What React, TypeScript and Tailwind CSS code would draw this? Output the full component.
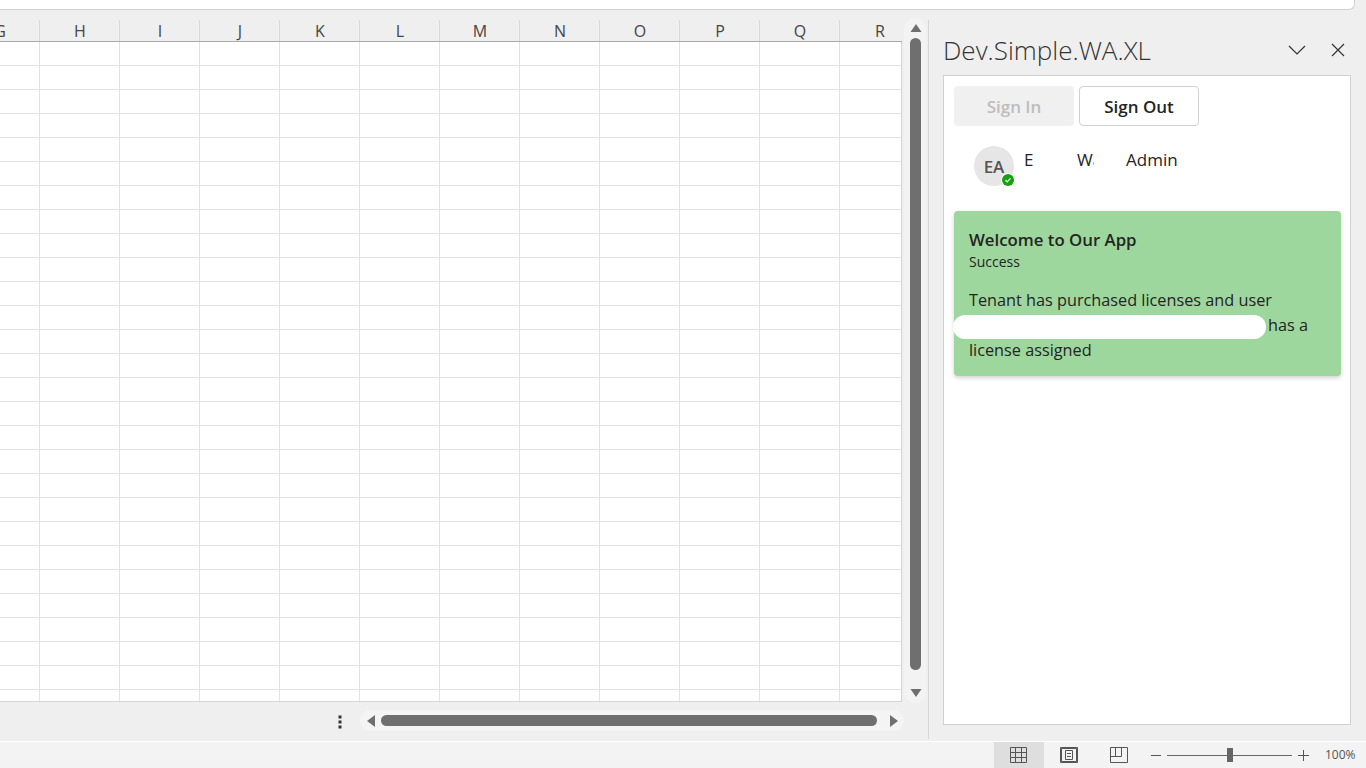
import React from "react";

const cols = ["G", "H", "I", "J", "K", "L", "M", "N", "O", "P", "Q", "R"];
const rows = Array.from({ length: 28 });

function ColumnHeader() {
  return (
    <div className="flex h-[22px] border-b border-[#a9a9a9] bg-[#efefef] overflow-hidden">
      <div className="flex ml-[-40px]">
        {cols.map((c) => (
          <div key={c} className="w-[80px] shrink-0 border-r border-[#d9d9d9] flex items-center justify-center text-[16px] leading-none text-[#444444] pl-[1px]">
            {c}
          </div>
        ))}
      </div>
    </div>
  );
}

function Grid() {
  return (
    <div className="flex-1 overflow-hidden bg-white border-b border-r border-[#d6d6d6]">
      {rows.map((_, i) => (
        <div key={i} className="flex h-[24px] ml-[-40px]">
          {cols.map((c) => (
            <div key={c} className="w-[80px] shrink-0 border-r border-b border-[#e1e1e1]" />
          ))}
        </div>
      ))}
    </div>
  );
}

function VScroll() {
  return (
    <div className="w-[26px] pl-[2px] mt-[-2px]">
      <div className="w-[22px] h-[685px] rounded-full bg-[#f3f3f3] flex flex-col items-start pl-[6px] pt-[6px]">
        <svg width="12" height="9" viewBox="0 0 12 9"><path d="M6 0 L11.5 8 L0.5 8 Z" fill="#6f6f6f" /></svg>
        <div className="w-[11px] h-[632px] mt-[5px] rounded-full bg-[#6f6f6f]" />
        <svg className="mt-[19px]" width="12" height="9" viewBox="0 0 12 9"><path d="M0.5 0 L11.5 0 L6 8 Z" fill="#6f6f6f" /></svg>
      </div>
    </div>
  );
}

function HScrollRow() {
  return (
    <div className="h-[37px] flex items-start shrink-0">
      <div className="w-[334px] shrink-0" />
      <svg className="mt-[12px] shrink-0" width="12" height="16" viewBox="0 0 12 16">
        <rect x="4.5" y="1.5" width="3" height="3" fill="#333" />
        <rect x="4.5" y="6.5" width="3" height="3" fill="#333" />
        <rect x="4.5" y="11.5" width="3" height="3" fill="#333" />
      </svg>
      <div className="ml-[14px] mt-[8px] w-[544px] h-[21px] rounded-full bg-[#f4f4f4] flex items-center pl-[6px] shrink-0">
        <svg className="shrink-0" width="10" height="12" viewBox="0 0 10 12"><path d="M9 0 L9 12 L1 6 Z" fill="#6f6f6f" /></svg>
        <div className="ml-[5px] w-[496px] h-[11px] rounded-full bg-[#6f6f6f] shrink-0" />
        <svg className="ml-[12px] shrink-0" width="10" height="12" viewBox="0 0 10 12"><path d="M1 0 L1 12 L9 6 Z" fill="#6f6f6f" /></svg>
      </div>
    </div>
  );
}

function Persona() {
  return (
    <div className="flex items-start pl-[30px] mt-[20px]">
      <div className="relative w-[40px] h-[40px] rounded-full bg-[#e6e6e6] flex items-center justify-center text-[17px] font-semibold text-[#555555] pt-[1px]">
        EA
        <div className="absolute right-[-1px] bottom-[-1px] w-[14px] h-[14px] rounded-full bg-white flex items-center justify-center">
          <div className="w-[12px] h-[12px] rounded-full bg-[#13a10e] flex items-center justify-center">
            <svg width="8" height="8" viewBox="0 0 8 8"><path d="M1.5 4.2 L3.2 5.8 L6.5 2.4" stroke="#ffffff" strokeWidth="1.2" fill="none" /></svg>
          </div>
        </div>
      </div>
      <div className="ml-[10px] w-[10px] overflow-hidden text-[17px] leading-[28px] text-[#242424]">Ed</div>
      <div className="ml-[43px] w-[17px] overflow-hidden text-[17px] leading-[28px] text-[#242424]">Wa</div>
      <div className="ml-[32px] text-[17px] leading-[28px] text-[#242424]">Admin</div>
    </div>
  );
}

function Card() {
  return (
    <div className="relative mt-[25px] ml-[10px] mr-[9px] h-[165px] rounded-[4px] bg-[#9ed79d] shadow-[0_2px_4px_rgba(0,0,0,0.18)] px-[15px] pt-[17px] text-[#242424]">
      <div className="text-[16.8px] font-semibold leading-[24px]">Welcome to Our App</div>
      <div className="text-[14px] leading-[20px]">Success</div>
      <div className="mt-[16px] text-[16.25px] leading-[25px]">
        <div>Tenant has purchased licenses and user</div>
        <div className="flex justify-end pr-[18px]">has a</div>
        <div>license assigned</div>
      </div>
      <div className="absolute left-[-1px] top-[104px] w-[313px] h-[24px] rounded-full bg-white" />
    </div>
  );
}

function TaskPane() {
  return (
    <div className="flex-1 flex flex-col pl-[14px] pr-[15px]">
      <div className="h-[65px] flex items-center justify-between shrink-0 pt-[14px]">
        <div className="text-[26px] leading-none font-light text-[#333333]">Dev.Simple.WA.XL</div>
        <div className="flex items-center pt-[1px]">
          <svg width="18" height="10" viewBox="0 0 18 10"><path d="M1 1 L9 9 L17 1" stroke="#333" strokeWidth="1.2" fill="none" /></svg>
          <svg className="ml-[25px] mr-[6px]" width="14" height="14" viewBox="0 0 14 14"><path d="M1 1 L13 13 M13 1 L1 13" stroke="#333" strokeWidth="1.2" fill="none" /></svg>
        </div>
      </div>
      <div className="h-[650px] bg-white border border-[#d0d0d0] pt-[10px]">
        <div className="flex gap-[5px] pl-[10px]">
          <div className="w-[120px] h-[40px] rounded-[4px] bg-[#f0f0f0] flex items-center justify-center text-[17px] font-semibold text-[#bdbdbd] pt-[1px]">Sign In</div>
          <div className="w-[120px] h-[40px] rounded-[4px] bg-white border border-[#d1d1d1] flex items-center justify-center text-[17px] font-semibold text-[#242424] pt-[1px]">Sign Out</div>
        </div>
        <Persona />
        <Card />
      </div>
    </div>
  );
}

function StatusBar() {
  return (
    <div className="h-[27px] bg-[#f3f3f3] border-t border-white flex items-stretch shrink-0">
      <div className="w-[994px] shrink-0" />
      <div className="w-[50px] bg-[#dedede] flex items-center justify-center pr-[1px]">
        <svg width="17" height="16" viewBox="0 0 17 16" fill="none" stroke="#555" strokeWidth="1">
          <path d="M0.5 0.5H16.5V15.5H0.5Z M0.5 5.5H16.5 M0.5 10.5H16.5 M5.5 0.5V15.5 M11.5 0.5V15.5" />
        </svg>
      </div>
      <div className="w-[50px] flex items-center justify-center">
        <svg width="18" height="16" viewBox="0 0 18 16" fill="none" stroke="#555" strokeWidth="1">
          <path d="M0.5 0.5H17.5V15.5H0.5Z M1.5 1.5H16.5V14.5H1.5Z M5.5 3.5H12.5V12.5H5.5Z M7 6.5H11 M7 9.5H11" />
        </svg>
      </div>
      <div className="w-[50px] flex items-center justify-center">
        <svg width="18" height="16" viewBox="0 0 18 16" fill="none" stroke="#555" strokeWidth="1">
          <path d="M0.5 0.5H17.5V15.5H0.5Z M5.5 0.5V9.5 M11.5 0.5V9.5 M0.5 9.5H11.5" />
        </svg>
      </div>
      <div className="flex items-center ml-[7px]">
        <div className="w-[10px] h-px bg-[#555]" />
        <div className="relative ml-[6px] w-[125px] h-px bg-[#666]">
          <div className="absolute left-[60px] top-[-7px] w-[6px] h-[14px] bg-[#666]" />
        </div>
        <svg className="ml-[6px]" width="11" height="11" viewBox="0 0 11 11"><path d="M0 5.5H11 M5.5 0V11" stroke="#555" strokeWidth="1" /></svg>
        <div className="ml-[16px] text-[12px] text-[#555555]">100%</div>
      </div>
    </div>
  );
}

export default function App() {
  return (
    <div className="w-[1366px] h-[768px] overflow-hidden bg-[#efefef] flex flex-col font-['Open_Sans',sans-serif]">
      <div className="h-[10px] shrink-0 mr-[11px] bg-white border-b border-r border-[#d0d0d0] rounded-br-[6px]" />
      <div className="flex-1 flex min-h-0">
        <div className="w-[929px] shrink-0 border-r border-[#d6d6d6] mt-[10px] mb-[2px] flex">
          <div className="w-[902px] shrink-0 flex flex-col">
            <ColumnHeader />
            <Grid />
            <HScrollRow />
          </div>
          <VScroll />
        </div>
        <TaskPane />
      </div>
      <StatusBar />
    </div>
  );
}
